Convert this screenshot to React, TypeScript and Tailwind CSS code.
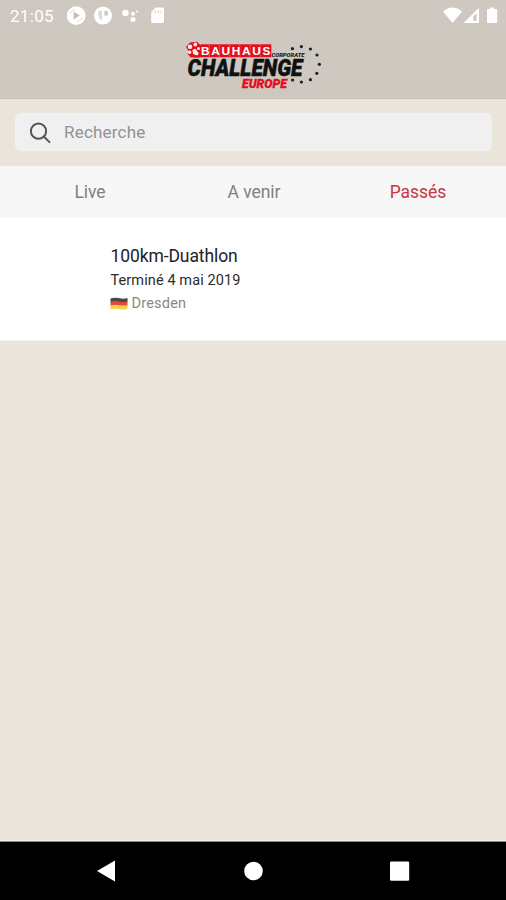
import React, { useState } from 'react'

const stars = [
  [292.4, 48.7], [301.4, 46.6], [310.4, 49], [317, 55], [319.4, 64.3],
  [316.8, 73.3], [310.4, 79.7], [301.4, 82], [292.6, 80],
]

// Status Bar Component
const StatusBar = () => (
  <div className="flex h-8 items-center text-white">
    <span className="w-[67px] pl-[10px] text-[17px] leading-8 tracking-[0.3px]">21:05</span>
    <svg width="100" height="32" viewBox="67 0 100 32" fill="#fff">
      <circle cx="76.2" cy="15.6" r="9.4" />
      <path d="M70 14.200q1-4 5-4.800M82.500 17q-1.200 3.800-5 4.800" stroke="#dedad5" strokeWidth="1" fill="none" />
      <path d="M73.600 11.600v8l6.200-4z" fill="#c4beb7" />
      <circle cx="103" cy="15.6" r="9" />
      <path d="M98.800 10.800h3.200v10q-5.400-4.300-3.200-10z" fill="#ddd9d4" />
      <path d="M104.400 10.800h3.400v4.800h-3.400z" fill="#cec8c1" />
      <circle cx="125.5" cy="13" r="3.3" />
      <circle cx="133" cy="13.8" r="2" />
      <circle cx="137" cy="11.4" r="1" />
      <circle cx="133" cy="19.4" r="2.5" />
      <path d="M155.700 7.400h6.600q1.700 0 1.700 1.700v12.200q0 1.700-1.700 1.700h-9.400q-1.700 0-1.700-1.700V12z" />
      <path d="M155.200 10.300v3M158.200 10.300v3M161.200 10.300v3" stroke="#dcd8d3" strokeWidth="1.100" />
    </svg>
    <svg className="ml-auto" width="64" height="32" viewBox="442 0 64 32" fill="#fff">
      <path d="M443 11.500q9.500-8 19 0L452.500 23z" />
      <path fillRule="evenodd" d="M479 7.700V23h-15.500zM476.600 13v7.800h-3.400v-4.200z" />
      <path d="M490 7.400h4v1.700h2.200q1 0 1 1v12q0 1-1 1h-8.200q-1 0-1-1v-12q0-1 1-1h2z" />
    </svg>
  </div>
)

// Event logo
const Logo = () => (
  <svg className="mx-auto overflow-visible" width="140" height="54" viewBox="183 38 140 54">
    <g fill="#e20f1b">
      <rect x="200.500" y="44.300" width="70.800" height="12.900" />
      <path d="M186 47l4-4.500 7-.7 4.500 4.500v10.500l-3 1-8-.5-3-3.500 1-3z" />
    </g>
    <g fill="#f7eeea">
      <circle cx="190" cy="46.800" r="2.300" />
      <circle cx="195.300" cy="44.500" r="1.900" />
      <circle cx="189.600" cy="52.300" r="1.700" />
      <circle cx="198.500" cy="48.600" r="1.500" />
      <path d="M192.500 49.800l3-1 3.300 4.700-1.500 2-4.300-1.500z" />
    </g>
    <path
      d="M209.300 44.300v13M219.400 44.300v13M229.500 44.300v13M239.800 44.300v13M250 44.300v13M260.200 44.300v13"
      stroke="#f27078"
      strokeWidth=".6"
    />
    <text
      x="201" y="54.900" textLength="69.300" lengthAdjust="spacing"
      fontFamily="'Liberation Sans', sans-serif" fontWeight="700" fontSize="11.800" fill="#fff"
    >
      BAUHAUS
    </text>
    <text
      x="271.500" y="56.600" textLength="33" lengthAdjust="spacingAndGlyphs"
      fontFamily="Roboto, sans-serif" fontSize="5.600" fontWeight="900" fontStyle="italic" fill="#171717"
    >
      CORPORATE
    </text>
    <text
      x="187.500" y="76.100" textLength="115" lengthAdjust="spacingAndGlyphs"
      fontFamily="Roboto, sans-serif" fontSize="24.500" fontWeight="900" fontStyle="italic"
      fill="#111" stroke="#111" strokeWidth=".5"
    >
      CHALLENGE
    </text>
    <text
      x="242" y="87.600" textLength="45" lengthAdjust="spacingAndGlyphs"
      fontFamily="Roboto, sans-serif" fontSize="13" fontWeight="900" fontStyle="italic"
      fill="#e20f1b" stroke="#e20f1b" strokeWidth=".3"
    >
      EUROPE
    </text>
    {stars.map(([x, y]) => (
      <circle key={`${x}-${y}`} cx={x} cy={y} r="1.600" fill="#1d1d1d" />
    ))}
  </svg>
)

// Search Component
const SearchBar = () => (
  <div className="pt-[14px] pr-[14px] pb-[15px] pl-[15px]">
    <label className="flex h-[38px] items-center rounded-md bg-[#f1f0f0]">
      <svg className="ml-[14px]" width="23" height="23" viewBox="0 0 23 23" fill="none" stroke="#555" strokeWidth="2">
        <circle cx="9.500" cy="10.200" r="7.600" />
        <path d="M15 15.700l5.500 5.400" strokeLinecap="round" />
      </svg>
      <input
        className="ml-3 min-w-0 flex-1 bg-transparent pt-[2px] text-[17px] tracking-[0.2px] outline-none placeholder:text-[#929292]"
        placeholder="Recherche"
      />
    </label>
  </div>
)

// Tabs Component
const Tabs = ({ active, setActive }: { active: string; setActive: React.Dispatch<React.SetStateAction<string>> }) => (
  <div className="flex h-[52px] bg-[#f7f7f7] pr-[6px] pl-[8px]">
    {['Live', 'A venir', 'Passés'].map((tab) => (
      <button
        key={tab}
        onClick={() => setActive(tab)}
        className={`flex-1 pt-px text-[17.5px] tracking-[-0.05px] ${tab === active ? 'text-[#c9363e]' : 'text-[#808080]'}`}
      >
        {tab}
      </button>
    ))}
  </div>
)

const Flag = () => (
  <svg className="-ml-px" width="18" height="14" viewBox="0 0 18 14">
    <path d="M.5 1.500q4-1.500 8.500-.4t8.500-.1v3.900H.5z" fill="#4b4545" />
    <path d="M.5 4.600q4-1.300 8.500-.2t8.500-.1v4.400H.5z" fill="#df4a3d" />
    <path d="M.5 8.500q4-1.300 8.500-.2t8.500-.1v3.700q-4 1.200-8.500.1t-8.500.3z" fill="#f8cf4c" />
  </svg>
)

const EventCard = () => (
  <div className="h-[123px] border-b border-[#f3f1ec] bg-white pt-[27px] pl-[110.5px]">
    <h2 className="text-[17.5px] leading-[23px] tracking-[-0.1px] text-[#222]">100km-Duathlon</h2>
    <p className="mt-px text-[14.5px] leading-[24px] tracking-[0.1px] text-[#2c2c2c]">Terminé 4 mai 2019</p>
    <div className="flex items-center gap-1 text-[14.5px] leading-[22px] tracking-[0.2px] text-[#888]">
      <Flag />
      <span>Dresden</span>
    </div>
  </div>
)

const NavBar = () => (
  <nav className="mt-auto flex h-[60px] flex-col border-t border-[#f5f3ec] bg-black">
    <div className="h-px bg-[#858680]" />
    <svg width="506" height="58" viewBox="0 842 506 58" fill="#fff">
      <path d="M97 871l18-10.500v21z" />
      <circle cx="253.500" cy="871" r="9.300" />
      <rect x="390" y="861.500" width="19.200" height="19.200" rx="1.200" />
    </svg>
  </nav>
)

export default function App() {
  const [active, setActive] = useState('Passés')

  return (
    <div className="flex h-[900px] w-[506px] flex-col overflow-hidden bg-[#e9e5da] font-[Roboto,sans-serif]">
      <header className="h-[99px] border-b border-[#c6c0b8] bg-[#cec8c1]">
        <StatusBar />
        <div className="pt-[6px]">
          <Logo />
        </div>
      </header>
      <SearchBar />
      <Tabs active={active} setActive={setActive} />
      <EventCard />
      <NavBar />
    </div>
  )
}
